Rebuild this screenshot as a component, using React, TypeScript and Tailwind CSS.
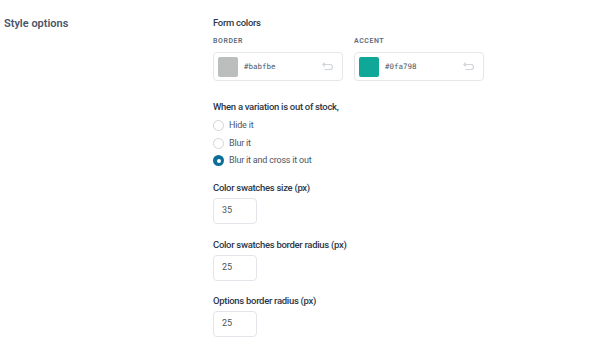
import React from "react";

function UndoIcon() {
  return (
    <svg width="12" height="9" viewBox="0 0 12 9" fill="none" stroke="#d1d5db" strokeWidth="1.2" strokeLinecap="round" strokeLinejoin="round">
      <path d="M2.5 1 L1 2.5 L2.5 4" />
      <path d="M1 2.5 H8 A2.5 2.5 0 0 1 8 7.5 H3" />
    </svg>
  );
}

function ColorField({ label, color, hex }: { label: string; color: string; hex: string }) {
  return (
    <div className="flex flex-col">
      <div className="text-[7px] font-semibold tracking-[0.08em] text-[#5f6b7a] leading-[10px] h-[10px]">{label}</div>
      <div className="mt-[6px] w-[130px] h-[29px] border border-[#e5e7eb] rounded-[4px] flex items-center pl-[4px] pr-[8px] bg-white">
        <div className="w-[20px] h-[20px] rounded-[2px]" style={{ background: color }} />
        <span className="ml-[6px] text-[7.5px] text-[#4b5563]" style={{ fontFamily: '"DejaVu Sans Mono", monospace' }}>{hex}</span>
        <div className="ml-auto flex items-center"><UndoIcon /></div>
      </div>
    </div>
  );
}

function Radio({ label, checked }: { label: string; checked?: boolean }) {
  return (
    <div className="flex items-center h-[17.5px]">
      {checked ? (
        <div className="w-[11px] h-[11px] rounded-full bg-[#0b6e99] flex items-center justify-center">
          <div className="w-[4px] h-[4px] rounded-full bg-white" />
        </div>
      ) : (
        <div className="w-[11px] h-[11px] rounded-full border border-[#d1d5db] bg-white" />
      )}
      <span className="ml-[5px] text-[9px] tracking-[-0.2px] text-[#4b5563]">{label}</span>
    </div>
  );
}

function NumberField({ label, value }: { label: string; value: string }) {
  return (
    <div className="flex flex-col">
      <div className="text-[9.5px] font-medium tracking-[-0.3px] text-[#2d3748] leading-[12px]">{label}</div>
      <div className="mt-[4px] w-[44px] h-[26px] border border-[#e2e5e9] rounded-[4px] flex items-center pl-[8px] text-[9px] text-[#4b5563] bg-white">{value}</div>
    </div>
  );
}

export default function App() {
  return (
    <div className="w-[607px] h-[355px] bg-white overflow-hidden flex" style={{ fontFamily: 'Roboto, "Noto Sans", sans-serif' }}>
      <div className="w-[213px] pl-[4px] pt-[16px]">
        <div className="text-[11px] font-semibold text-[#4a5568] leading-[16px]">Style options</div>
      </div>
      <div className="flex flex-col pt-[17px]">
        <div className="text-[9.5px] font-medium tracking-[-0.3px] text-[#2d3748] leading-[12px]">Form colors</div>
        <div className="mt-[7px] flex gap-[11px]">
          <ColorField label="BORDER" color="#babfbe" hex="#babfbe" />
          <ColorField label="ACCENT" color="#0fa798" hex="#0fa798" />
        </div>
        <div className="mt-[20px] text-[9.5px] font-medium tracking-[-0.3px] text-[#2d3748] leading-[12px]">When a variation is out of stock,</div>
        <div className="mt-[4px] flex flex-col">
          <Radio label="Hide it" />
          <Radio label="Blur it" />
          <Radio label="Blur it and cross it out" checked />
        </div>
        <div className="mt-[12px]">
          <NumberField label="Color swatches size (px)" value="35" />
        </div>
        <div className="mt-[15px]">
          <NumberField label="Color swatches border radius (px)" value="25" />
        </div>
        <div className="mt-[14px]">
          <NumberField label="Options border radius (px)" value="25" />
        </div>
      </div>
    </div>
  );
}
